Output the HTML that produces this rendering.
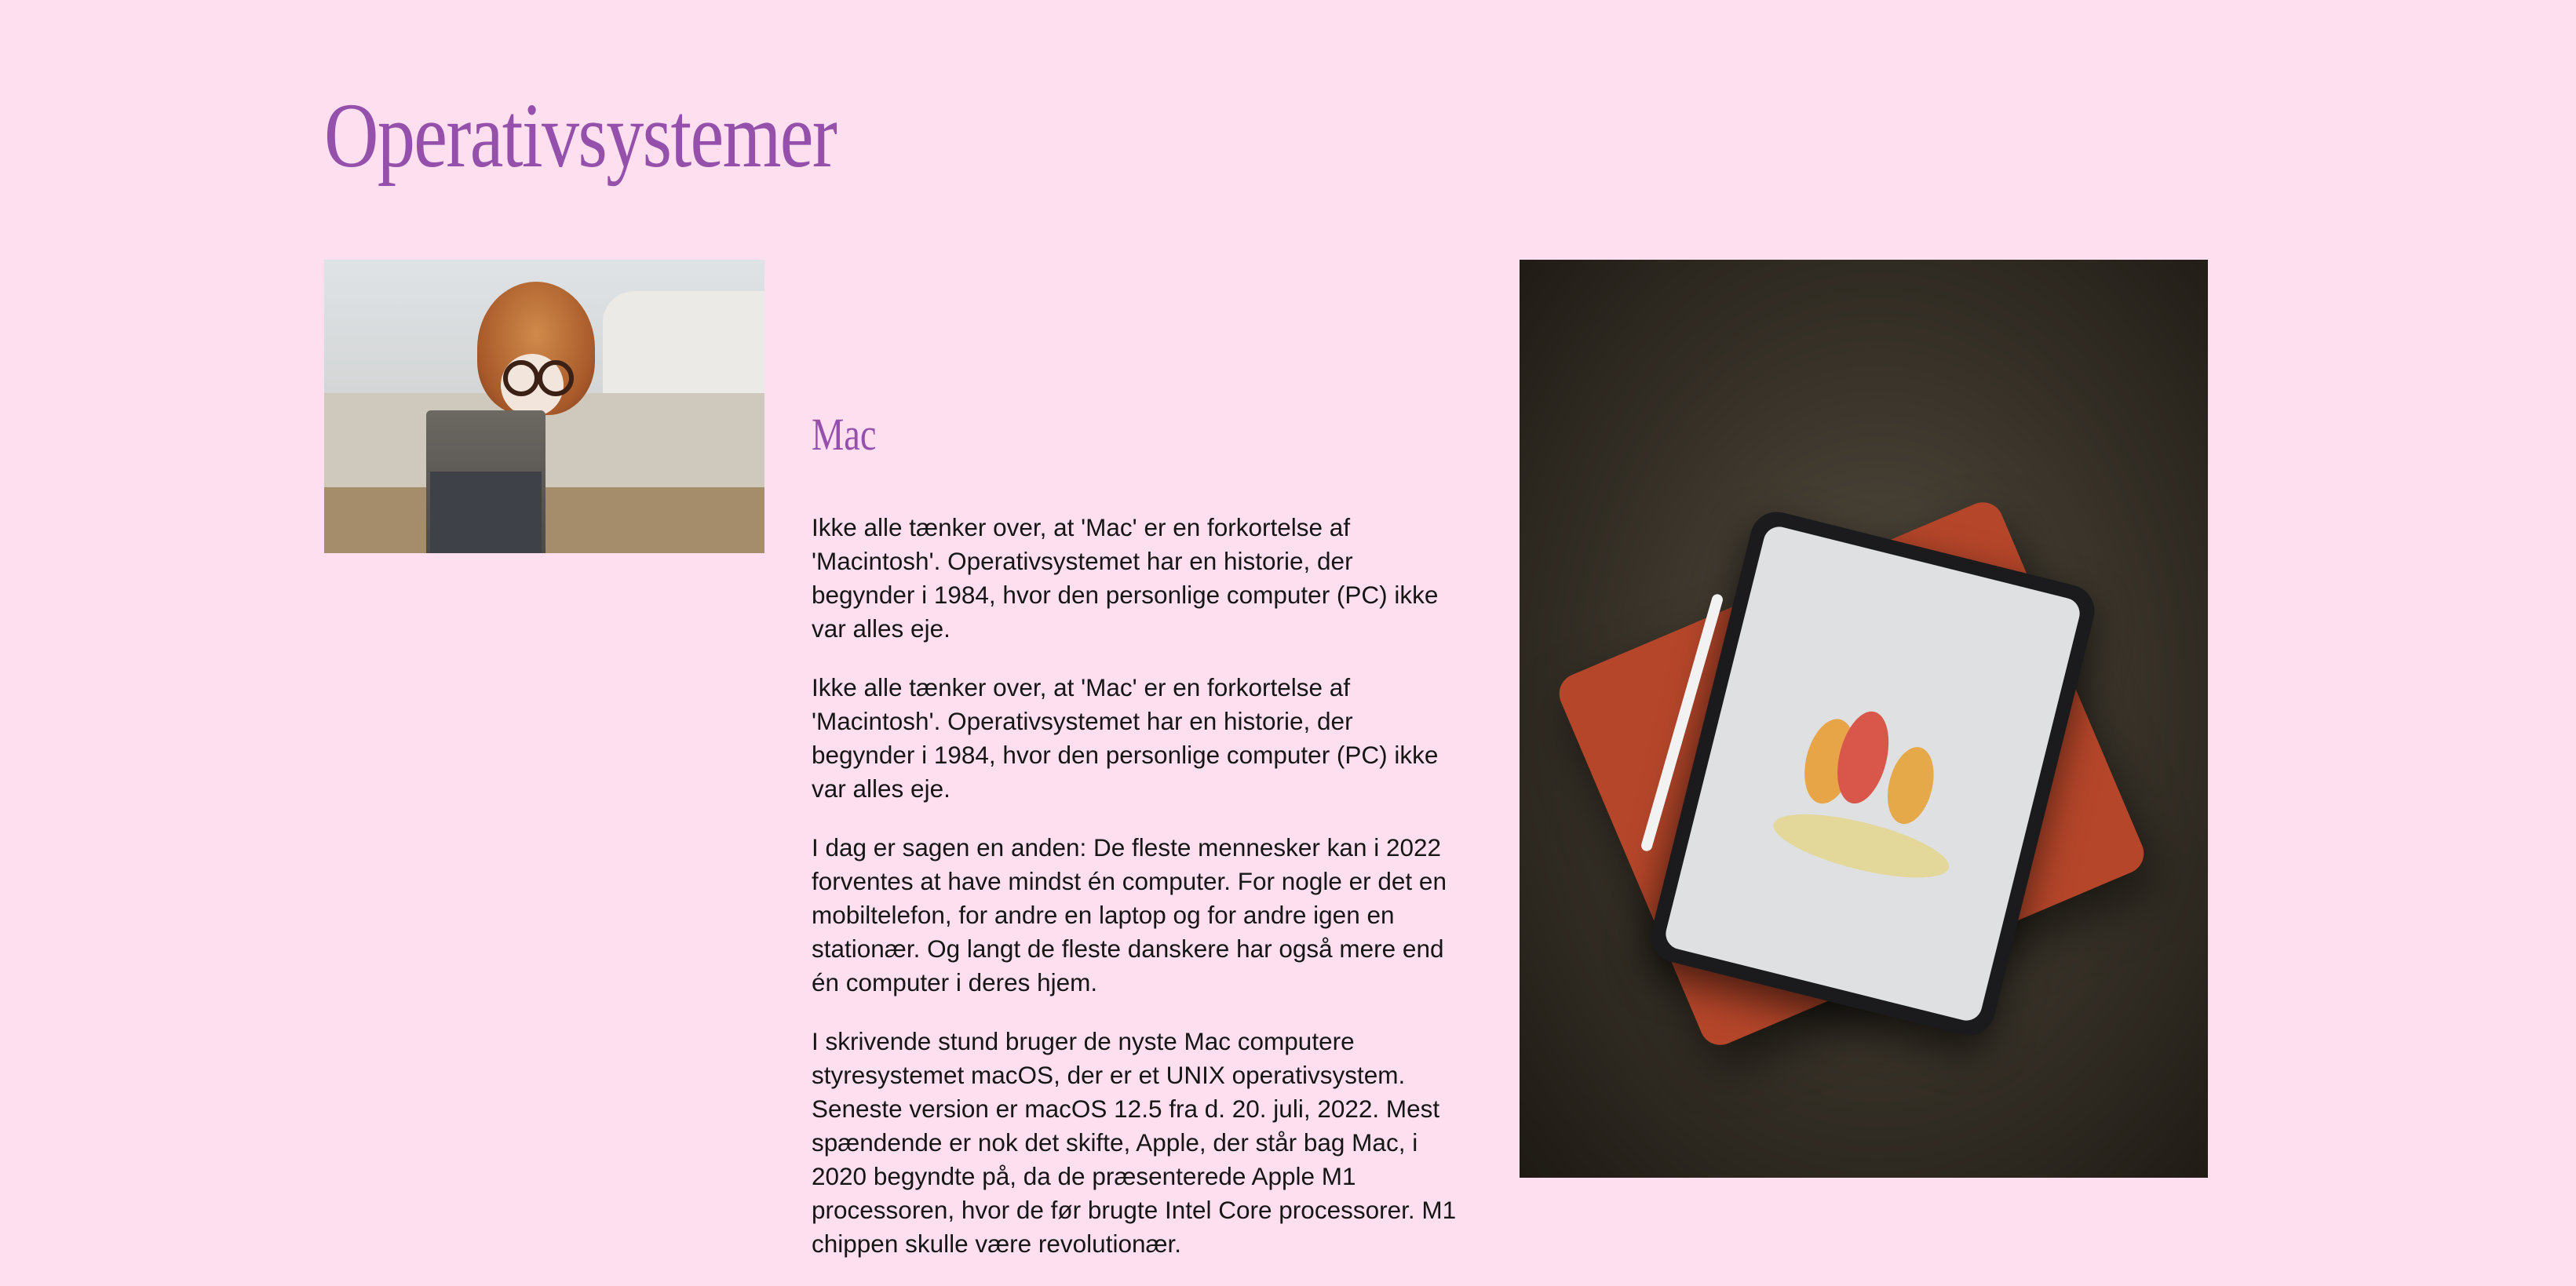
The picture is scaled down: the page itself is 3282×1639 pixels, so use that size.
<!DOCTYPE html>
<html><head><meta charset="utf-8"><style>
html,body{margin:0;padding:0;}
body{width:3282px;height:1634px;background:#fddff0;position:relative;overflow:hidden;font-family:"Liberation Sans",sans-serif;}
h1{position:absolute;left:413px;top:108px;margin:0;font-family:"Liberation Serif",serif;font-weight:normal;font-size:118px;color:#9550ab;transform:scaleX(0.815);transform-origin:left top;letter-spacing:-2px;line-height:1.1;}
h2{position:absolute;left:1034px;top:520px;margin:0;font-family:"Liberation Serif",serif;font-weight:normal;font-size:58px;color:#9550ab;transform:scaleX(0.8);transform-origin:left top;}
.txt{position:absolute;left:1034px;top:651px;color:#161616;font-size:31.5px;line-height:43px;}
.txt p{margin:0 0 32px 0;white-space:nowrap;}
.dog{position:absolute;left:413px;top:331px;width:561px;height:374px;overflow:hidden;background:linear-gradient(180deg,#dfe3e6 0%,#d4d6d6 45%,#c9bfae 72%,#a88f6c 100%);}
.pic{position:absolute;left:1936px;top:331px;width:877px;height:1170px;overflow:hidden;background:radial-gradient(ellipse at 52% 48%,#575043 0%,#3b352b 45%,#1e1a14 100%);}
</style></head><body>
<h1>Operativsystemer</h1>
<div class="dog">
  <div style="position:absolute;left:355px;top:40px;width:206px;height:240px;background:#ebeae6;border-radius:40px 0 0 0;"></div>
  <div style="position:absolute;left:0;top:170px;width:561px;height:120px;background:#cfc9bd;"></div>
  <div style="position:absolute;left:0;top:290px;width:561px;height:84px;background:#a58c6a;"></div>
  <div style="position:absolute;left:195px;top:28px;width:150px;height:170px;background:radial-gradient(ellipse at 50% 40%,#d08a4a,#a85a2a 70%,#7a3a20);border-radius:50% 50% 40% 40%;"></div>
  <div style="position:absolute;left:225px;top:120px;width:80px;height:80px;background:#f2e6dc;border-radius:50%;"></div>
  <div style="position:absolute;left:228px;top:128px;width:34px;height:34px;border:6px solid #3b2015;border-radius:50%;"></div>
  <div style="position:absolute;left:272px;top:128px;width:34px;height:34px;border:6px solid #3b2015;border-radius:50%;"></div>
  <div style="position:absolute;left:130px;top:192px;width:152px;height:182px;background:linear-gradient(180deg,#6c6862,#4c4a47);border-radius:6px 6px 0 0;"></div>
  <div style="position:absolute;left:135px;top:270px;width:142px;height:104px;background:#3e4148;"></div>
</div>
<h2>Mac</h2>
<div class="txt">
<p>Ikke alle tænker over, at 'Mac' er en forkortelse af<br>'Macintosh'. Operativsystemet har en historie, der<br>begynder i 1984, hvor den personlige computer (PC) ikke<br>var alles eje.</p>
<p>Ikke alle tænker over, at 'Mac' er en forkortelse af<br>'Macintosh'. Operativsystemet har en historie, der<br>begynder i 1984, hvor den personlige computer (PC) ikke<br>var alles eje.</p>
<p>I dag er sagen en anden: De fleste mennesker kan i 2022<br>forventes at have mindst én computer. For nogle er det en<br>mobiltelefon, for andre en laptop og for andre igen en<br>stationær. Og langt de fleste danskere har også mere end<br>én computer i deres hjem.</p>
<p>I skrivende stund bruger de nyste Mac computere<br>styresystemet macOS, der er et UNIX operativsystem.<br>Seneste version er macOS 12.5 fra d. 20. juli, 2022. Mest<br>spændende er nok det skifte, Apple, der står bag Mac, i<br>2020 begyndte på, da de præsenterede Apple M1<br>processoren, hvor de før brugte Intel Core processorer. M1<br>chippen skulle være revolutionær.</p>
</div>
<div class="pic">
  <div style="position:absolute;left:118px;top:400px;width:610px;height:510px;background:#b5462a;border-radius:26px;transform:rotate(-23deg);box-shadow:0 30px 60px rgba(0,0,0,.5);"></div>
  <div style="position:absolute;left:225px;top:360px;width:450px;height:590px;background:#1b1b1d;border-radius:34px;transform:rotate(14deg);box-shadow:0 20px 50px rgba(0,0,0,.6);">
    <div style="position:absolute;left:18px;top:18px;right:18px;bottom:18px;background:#dfe0e2;border-radius:20px;">
      <div style="position:absolute;left:120px;top:220px;width:60px;height:110px;background:#e8a548;border-radius:50%;"></div>
      <div style="position:absolute;left:160px;top:200px;width:60px;height:120px;background:#d9574a;border-radius:50%;"></div>
      <div style="position:absolute;left:230px;top:230px;width:55px;height:100px;background:#e6a94a;border-radius:50%;"></div>
      <div style="position:absolute;left:100px;top:340px;width:230px;height:60px;background:#e3d79a;border-radius:50%;"></div>
    </div>
  </div>
  <div style="position:absolute;left:200px;top:420px;width:14px;height:340px;background:#f2f2f2;border-radius:7px;transform:rotate(16deg);"></div>
</div>
</body></html>
